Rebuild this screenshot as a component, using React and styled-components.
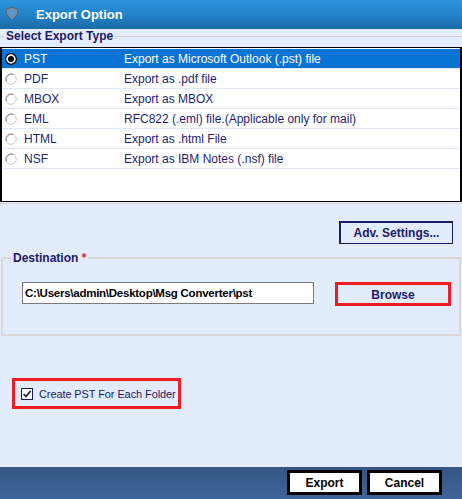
import React from "react";
import styled, { createGlobalStyle } from "styled-components";

const GlobalStyle = createGlobalStyle`
  html, body {
    margin: 0;
    padding: 0;
    background: #e3ecfc;
    font-family: "Liberation Sans", Arial, sans-serif;
  }
  * { box-sizing: border-box; }
  svg { flex-shrink: 0; }
`;

const types = [
  { name: "PST", desc: "Export as Microsoft Outlook (.pst) file" },
  { name: "PDF", desc: "Export as .pdf file" },
  { name: "MBOX", desc: "Export as MBOX" },
  { name: "EML", desc: "RFC822 (.eml) file.(Applicable only for mail)" },
  { name: "HTML", desc: "Export as .html File" },
  { name: "NSF", desc: "Export as IBM Notes (.nsf) file" },
];

function Radio({ checked }) {
  return (
    <svg width="12" height="12" viewBox="0 0 12 12">
      {checked ? (
        <>
          <circle cx="6" cy="6" r="5.3" fill="#fff" stroke="#000" strokeWidth="1.2" />
          <circle cx="6" cy="6" r="3" fill="#000" />
        </>
      ) : (
        <>
          <circle cx="6" cy="6" r="5.3" fill="#fff" stroke="#c8c8c8" strokeWidth="1" />
          <path d="M1.5 8 A5 5 0 0 1 8 1.5" fill="none" stroke="#8c8c8c" strokeWidth="1" />
        </>
      )}
    </svg>
  );
}

function AppIcon() {
  return (
    <svg width="16" height="14" viewBox="0 0 16 14">
      <path d="M2 2 L8 0.5 L14 2 L13 8 L8 13 L3 8 Z" fill="#7d8fa8" stroke="#4b5d78" strokeWidth="0.8" />
      <path d="M5 4 L11 4 L10 6 L7 6 L10 8 L6 10 L7 8 L5 6 Z" fill="#3fa3e6" />
    </svg>
  );
}

function CheckIcon() {
  return (
    <svg width="12" height="12" viewBox="0 0 12 12">
      <rect x="0.5" y="0.5" width="11" height="11" fill="#fff" stroke="#1d1a5e" strokeWidth="1" />
      <path d="M2.6 6 L5 8.5 L9.5 3" fill="none" stroke="#1d1a5e" strokeWidth="1.8" />
    </svg>
  );
}

export default function App() {
  return (
    <>
      <GlobalStyle />
      <Window>
        <TitleBar>
          <AppIcon />
          <Title>Export Option</Title>
        </TitleBar>

        <TypeGroup>
          <Legend>Select Export Type</Legend>
          <ListBox>
            {types.map((t, i) => (
              <Row key={t.name} selected={i === 0}>
                <RadioCell>
                  <Radio checked={i === 0} />
                </RadioCell>
                <NameCell>{t.name}</NameCell>
                <DescCell>{t.desc}</DescCell>
              </Row>
            ))}
          </ListBox>
        </TypeGroup>

        <AdvRow>
          <NavyButton>Adv. Settings...</NavyButton>
        </AdvRow>

        <DestGroup>
          <Legend>
            Destination <Star>*</Star>
          </Legend>
          <DestRow>
            <PathInput readOnly value={"C:\\Users\\admin\\Desktop\\Msg Converter\\pst"} />
            <BrowseButton>Browse</BrowseButton>
          </DestRow>
        </DestGroup>

        <CheckWrap>
          <CheckIcon />
          <CheckLabel>Create PST For Each Folder</CheckLabel>
        </CheckWrap>

        <Spacer />

        <BottomBar>
          <FooterButton>Export</FooterButton>
          <FooterButton>Cancel</FooterButton>
        </BottomBar>
      </Window>
    </>
  );
}

const Window = styled.div`
  width: 462px;
  height: 499px;
  display: flex;
  flex-direction: column;
  background: #e3ecfc;
  overflow: hidden;
`;

const TitleBar = styled.div`
  height: 29px;
  flex-shrink: 0;
  display: flex;
  align-items: center;
  gap: 16px;
  padding: 0 0 1px 4px;
  background: linear-gradient(to bottom, #2d95dd 0%, #2283c9 50%, #1a6aa6 100%);
`;

const Title = styled.span`
  color: #fff;
  font-weight: bold;
  font-size: 13px;
`;

const TypeGroup = styled.fieldset`
  margin: 0;
  padding: 4px 0 1px 0;
  min-width: 0;
  border: 0;
  border-top: 1px solid #d9d4c8;
  border-bottom: 1px solid #d6d6d6;
`;

const Legend = styled.legend`
  margin-left: 4px;
  padding: 0 2px;
  font-size: 12px;
  line-height: 14px;
  font-weight: bold;
  color: #1d1a66;
  white-space: nowrap;
`;

const Star = styled.span`
  color: #e0242c;
`;

const ListBox = styled.div`
  height: 155px;
  background: #fff;
  border: 1px solid #000;
  border-left-width: 2px;
  border-right-width: 2px;
  padding-top: 1px;
`;

const Row = styled.div`
  height: 20px;
  display: flex;
  align-items: center;
  border-bottom: 1px solid #dfe8f7;
  background: ${(p) => (p.selected ? "#0a74d4" : "#fff")};
  color: ${(p) => (p.selected ? "#fff" : "#1f1f6e")};
  font-size: 12px;
`;

const RadioCell = styled.div`
  width: 22px;
  padding-left: 3px;
  display: flex;
  align-items: center;
`;

const NameCell = styled.div`
  width: 100px;
`;

const DescCell = styled.div`
  flex: 1;
  white-space: nowrap;
`;

const AdvRow = styled.div`
  display: flex;
  justify-content: flex-end;
  padding: 17px 9px 0 0;
`;

const NavyButton = styled.button`
  width: 114px;
  height: 23px;
  background: #e3ecfc;
  border-color: #1d1a66;
  border-width: 2px 1px 1px 2px;
  border-style: solid;
  color: #1d1a66;
  font-family: inherit;
  font-weight: bold;
  font-size: 12px;
  padding: 0;
`;

const DestGroup = styled.fieldset`
  margin: 7px 1px 0 1px;
  padding: 17px 8px 28px 4px;
  min-width: 0;
  border: 2px solid #dad8d3;
`;

const DestRow = styled.div`
  display: flex;
  align-items: flex-start;
  justify-content: space-between;
  padding-left: 15px;
`;

const PathInput = styled.input`
  width: 292px;
  height: 22px;
  border: 1px solid #7a7a7a;
  background: #fff;
  padding: 0 2px;
  font-family: inherit;
  font-weight: bold;
  font-size: 11.5px;
  letter-spacing: -0.25px;
  color: #000;
  outline: none;
`;

const BrowseButton = styled.button`
  width: 116px;
  height: 24px;
  background: #e3ecfc;
  border: 3px solid #ee1c25;
  color: #1d1a66;
  font-family: inherit;
  font-weight: bold;
  font-size: 12px;
  padding: 2px 0 0;
`;

const CheckWrap = styled.div`
  align-self: flex-start;
  margin: 42px 0 0 12px;
  width: 169px;
  height: 31px;
  border: 3px solid #ee1c25;
  display: flex;
  align-items: center;
  gap: 6px;
  padding-left: 6px;
`;

const CheckLabel = styled.span`
  font-size: 11px;
  color: #1d1a66;
  white-space: nowrap;
  letter-spacing: -0.1px;
`;

const Spacer = styled.div`
  flex: 1;
`;

const BottomBar = styled.div`
  height: 32px;
  flex-shrink: 0;
  display: flex;
  justify-content: flex-end;
  align-items: flex-start;
  gap: 5px;
  padding: 3px 20px 0 0;
  background: linear-gradient(to bottom, #335683 0%, #3e6598 100%);
`;

const FooterButton = styled.button`
  width: 75px;
  height: 25px;
  background: #fff;
  border: 3px solid #000;
  color: #000;
  font-family: inherit;
  font-weight: bold;
  font-size: 12px;
  padding: 0;
`;
